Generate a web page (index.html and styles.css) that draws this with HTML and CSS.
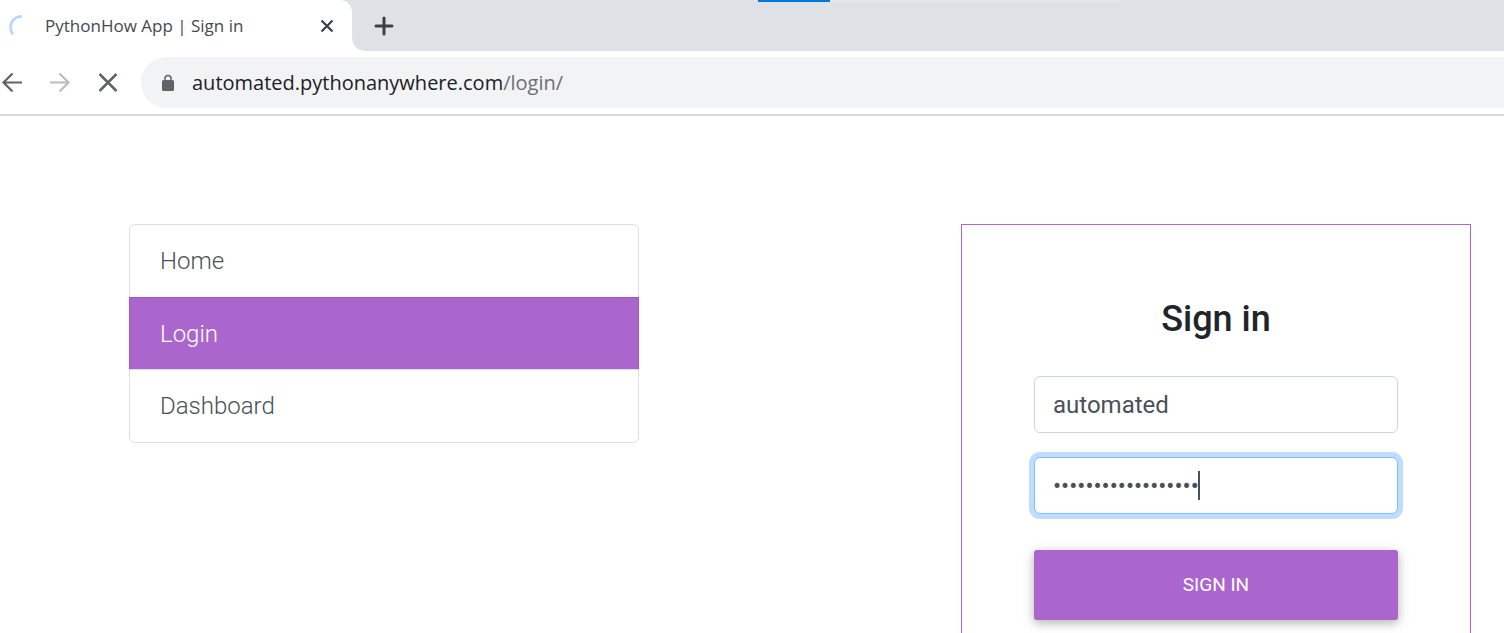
FILE: index.html
```html
<!DOCTYPE html>
<html lang="en">
<head>
<meta charset="utf-8">
<title>PythonHow App | Sign in</title>
<link rel="stylesheet" href="styles.css">
</head>
<body>
<header class="browser">
  <div class="tab-strip">
    <div class="tab">
      <svg class="spinner" width="24" height="24" viewBox="0 0 24 24" fill="none" aria-hidden="true"><path d="M16 2.300C6.500 2.300 1.300 12 7 20.500" stroke="#bbd6fb" stroke-width="2.800"/></svg>
      <span class="tab-title">PythonHow App | Sign in</span>
      <button class="icon-button" type="button" aria-label="Close tab"><svg width="16" height="16" viewBox="0 0 16 16"><path d="M2.500 2.500L13.500 13.500M13.500 2.500L2.500 13.500" stroke="#3c4043" stroke-width="2.200"/></svg></button>
    </div>
    <button class="icon-button new-tab" type="button" aria-label="New tab"><svg width="20" height="20" viewBox="0 0 20 20"><path d="M10 2V18M2 10H18" stroke="#3c4043" stroke-width="3" stroke-linecap="round"/></svg></button>
    <div class="progress"><div class="progress-value"></div></div>
  </div>
  <div class="toolbar">
    <nav class="controls" aria-label="Browser controls">
      <button class="icon-button" type="button" aria-label="Back"><svg width="24" height="24" viewBox="0 0 24 24" fill="none" stroke="#5f6368" stroke-width="2.200"><path d="M22 11.500H3.500M12.500 2.500L3.500 11.500L12.500 20.500"/></svg></button>
      <button class="icon-button" type="button" aria-label="Forward"><svg width="24" height="24" viewBox="0 0 24 24" fill="none" stroke="#babcbe" stroke-width="2.200"><path d="M2 11.500H20.500M11.500 2.500L20.500 11.500L11.500 20.500"/></svg></button>
      <button class="icon-button" type="button" aria-label="Stop"><svg width="24" height="24" viewBox="0 0 24 24" fill="none" stroke="#5f6368" stroke-width="2.500"><path d="M3.500 3L20.500 20M20.500 3L3.500 20"/></svg></button>
    </nav>
    <div class="address">
      <svg width="14" height="18" viewBox="0 0 14 18" aria-hidden="true"><rect x="1" y="6" width="12" height="11" rx="1.500" fill="#5f6368"/><path d="M4 7V4.500a3 3 0 0 1 6 0V7" fill="none" stroke="#5f6368" stroke-width="1.500"/></svg>
      <span class="url">automated.pythonanywhere.com<span class="path">/login/</span></span>
    </div>
  </div>
</header>
<main class="page">
  <nav class="menu" aria-label="Site">
    <a class="menu-item" href="#home">Home</a>
    <a class="menu-item active" href="#login" aria-current="page">Login</a>
    <a class="menu-item" href="#dashboard">Dashboard</a>
  </nav>
  <form class="card">
    <h1 class="title">Sign in</h1>
    <input class="field" type="text" aria-label="Username" value="automated">
    <div class="password">
      <input class="field focused" type="password" aria-label="Password" value="automatedautomated">
      <span class="caret"></span>
    </div>
    <button class="submit" type="button">SIGN IN</button>
  </form>
</main>
</body>
</html>
```
FILE: styles.css
```css
* {
  box-sizing: border-box;
}

body {
  margin: 0;
  height: 100vh;
  display: flex;
  flex-direction: column;
  overflow: hidden;
  background: #fff;
  font-family: Roboto, "Liberation Sans", sans-serif;
  font-size: 24px;
}

.browser {
  flex: none;
  border-bottom: 2px solid #dcdcdc;
  font-family: "Open Sans", "Noto Sans", sans-serif;
}

.tab-strip {
  position: relative;
  display: flex;
  align-items: center;
  height: 51px;
  background: #dee1e6;
}

.tab {
  position: relative;
  display: flex;
  align-items: center;
  width: 352px;
  height: 100%;
  padding: 0 17px 0 6px;
  border-radius: 0 12px 0 0;
  background: #fff;
}

.tab::after {
  content: "";
  position: absolute;
  left: 100%;
  bottom: 0;
  width: 12px;
  height: 12px;
  background: radial-gradient(circle at 100% 0, transparent 11px, #fff 12px);
}

.spinner {
  flex: none;
  margin-right: 15px;
}

.tab-title {
  flex: 1;
  color: #45494d;
  font-size: 17px;
  white-space: nowrap;
}

.icon-button {
  display: flex;
  padding: 0;
  border: 0;
  background: none;
}

.new-tab {
  margin-left: 22px;
}

.progress {
  position: absolute;
  top: 0;
  left: 758px;
  width: 362px;
  height: 2px;
  background: #e6e6e6;
}

.progress-value {
  width: 72px;
  height: 100%;
  background: #0078d7;
}

.toolbar {
  display: flex;
  align-items: center;
  padding: 6px 0;
}

.controls {
  display: flex;
  gap: 24px;
  width: 141px;
}

.address {
  flex: 1;
  display: flex;
  align-items: center;
  gap: 17px;
  height: 51px;
  padding-left: 20px;
  border-radius: 26px 0 0 26px;
  background: #f1f3f4;
}

.url {
  color: #202124;
  font-size: 20px;
}

.path {
  color: #6b6f73;
}

.page {
  flex: 1;
  min-height: 0;
  display: grid;
  grid-template-columns: 1fr 1fr;
  column-gap: 322px;
  align-items: start;
  padding: 108px 33px 0 129px;
  overflow: hidden;
}

.menu {
  border: 1px solid #dfdfdf;
  border-radius: 6px;
}

.menu-item {
  display: flex;
  align-items: center;
  height: 72px;
  padding: 0 30px;
  color: #495057;
  font-weight: 300;
  text-decoration: none;
}

.menu-item.active {
  margin: 0 -1px;
  border: 1px solid #9c58be;
  border-bottom: 0;
  background: #aa66cc;
  color: #fff;
}

.menu-item.active + .menu-item {
  height: 73px;
  border-top: 1px solid #dfdfdf;
}

.card {
  display: flex;
  flex-direction: column;
  padding: 72px;
  border: 1px solid #aa66cc;
}

.title {
  margin: 0 0 34px;
  color: #212529;
  font-size: 36px;
  font-weight: 500;
  line-height: 45px;
  text-align: center;
}

.field {
  display: block;
  width: 100%;
  height: 57px;
  padding: 0 18px;
  border: 1px solid #ced4da;
  border-radius: 6px;
  outline: 0;
  background: #fff;
  color: #495057;
  font: inherit;
}

.password {
  position: relative;
  margin: 24px 0 36px;
}

.focused {
  border-color: #80bdff;
  box-shadow: 0 0 0 5px #bfdeff;
}

.caret {
  position: absolute;
  top: 14px;
  left: 164px;
  width: 2px;
  height: 29px;
  background: #495057;
}

.submit {
  height: 70px;
  padding: 0 0 2px;
  border: 0;
  border-radius: 3px;
  background: #aa66cc;
  box-shadow: 0 3px 8px rgba(0, 0, 0, 0.2), 0 3px 15px rgba(0, 0, 0, 0.12);
  color: #fff;
  font-family: inherit;
  font-size: 19px;
}
```
